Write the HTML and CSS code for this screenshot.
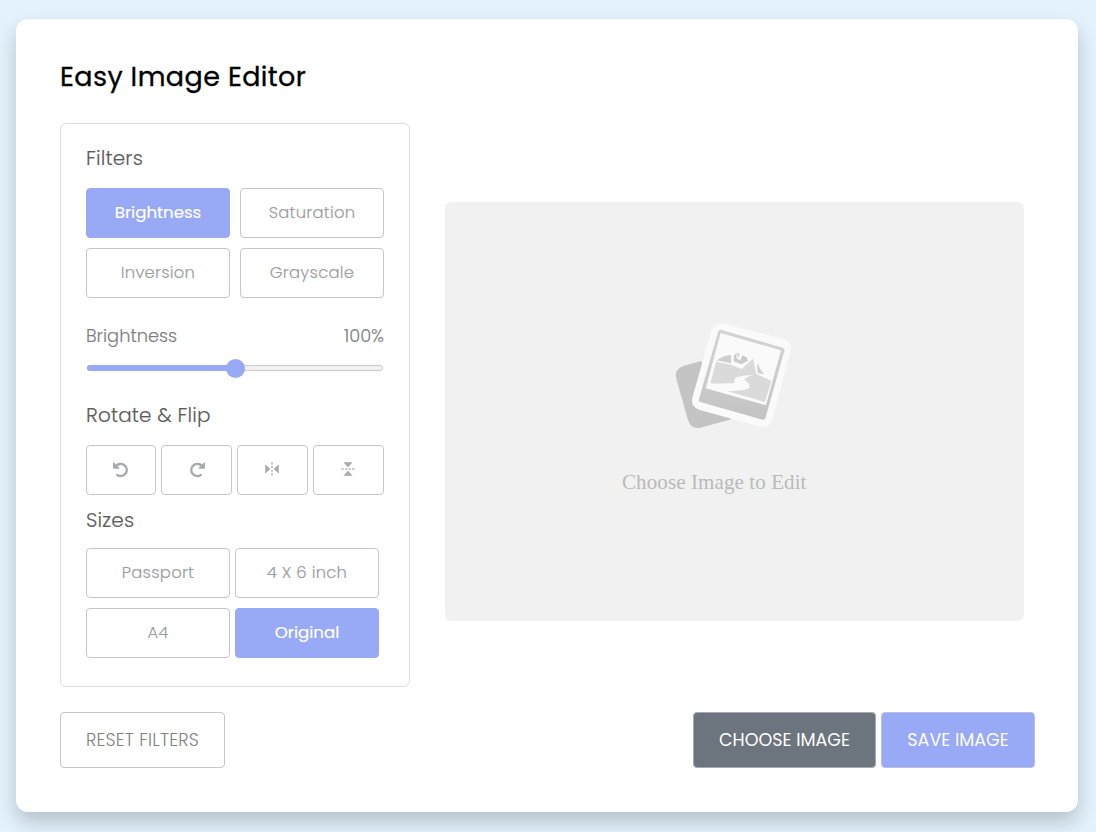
FILE: index.html
```html
<!DOCTYPE html>
<html lang="en">
<head>
<meta charset="utf-8">
<title>Easy Image Editor</title>
<link rel="stylesheet" href="styles.css">
</head>
<body>
<div class="container">
  <h1 class="heading"><span>Easy Image Editor</span></h1>
  <div class="wrapper">
    <div class="editor-panel">
      <h2 class="title title-filters">Filters</h2>
      <div class="options filters">
        <button class="option active">Brightness</button>
        <button class="option">Saturation</button>
        <button class="option">Inversion</button>
        <button class="option">Grayscale</button>
      </div>
      <div class="slider">
        <div class="slider-info"><span class="name">Brightness</span><span class="value">100%</span></div>
        <div class="track"><div class="fill"></div><div class="thumb"></div></div>
      </div>
      <h2 class="title title-rotate">Rotate &amp; Flip</h2>
      <div class="options rotate">
        <button class="option" aria-label="Rotate left"><svg width="16" height="16" viewBox="0 0 16 16"><path d="M2.6 4.6A6.1 6.1 0 1 1 4.2 13" fill="none" stroke="currentColor" stroke-width="2.3" stroke-linecap="round"/><path d="M0 .9Q0 0 .8.6L6.2 5.8Q6.8 6.8 5.7 6.8H.8Q0 6.8 0 6Z" fill="currentColor"/></svg></button>
        <button class="option" aria-label="Rotate right"><svg width="16" height="16" viewBox="0 0 16 16"><path d="M13.4 4.6A6.1 6.1 0 1 0 11.8 13" fill="none" stroke="currentColor" stroke-width="2.3" stroke-linecap="round"/><path d="M16 .9Q16 0 15.2.6L9.8 5.8Q9.2 6.8 10.3 6.8h4.9Q16 6.8 16 6Z" fill="currentColor"/></svg></button>
        <button class="option" aria-label="Flip horizontal"><svg class="flip" width="14" height="14" viewBox="0 0 14 14"><path d="M.5 3v8L5 7ZM13.500 3v8L9 7Z" fill="currentColor" stroke="currentColor" stroke-width=".6"/><path d="M7 .5v13" stroke="currentColor" stroke-width="1.400" stroke-dasharray="2 1.600"/></svg></button>
        <button class="option" aria-label="Flip vertical"><svg class="flip" width="14" height="14" viewBox="0 0 14 14"><path d="M3 .5h8L7 5ZM3 13.500h8L7 9Z" fill="currentColor" stroke="currentColor" stroke-width=".6"/><path d="M.5 7h13" stroke="currentColor" stroke-width="1.400" stroke-dasharray="2 1.600"/></svg></button>
      </div>
      <h2 class="title title-sizes">Sizes</h2>
      <div class="options sizes">
        <button class="option">Passport</button>
        <button class="option">4 X 6 inch</button>
        <button class="option">A4</button>
        <button class="option active">Original</button>
      </div>
    </div>
    <div class="preview">
      <svg class="picture" width="150" height="130" viewBox="0 0 450 390">
        <defs><linearGradient id="shade" x1="0" y1="0" x2="0" y2="1"><stop offset="0" stop-color="#d4d4d4"/><stop offset="1" stop-color="#c3c3c3"/></linearGradient></defs>
        <path d="M124 153L69 168Q42 178 49 207L84 330Q93 359 121 353L214 328Z" fill="#c4c4c4"/>
        <path d="M188 40L372 88Q398 97 392 122L335 333Q327 356 301 350L117 299Q91 289 97 263L154 62Q162 37 188 40Z" fill="#fafafa"/>
        <path d="M183 59L368 113Q375 116 373 123L316 325Q314 330 308 329L121 276Q115 274 117 268L174 65Q176 58 183 59Z" fill="url(#shade)"/>
        <path d="M182 69L363 121L318 286L137 235Z" fill="#fafafa"/>
        <path d="M169 154L213 161L244 175L281 142L290 188L334 213L315 276L203 244L151 218Z" fill="#dadada"/>
        <path d="M167 154Q191 134 216 135L215 163L187 158ZM292 158Q299 177 312 193L292 190Z" fill="#cfcfcf"/>
        <path d="M222 137L230 128L260 142L264 152L244 163L221 154Z" fill="#cacaca"/>
        <path d="M228 124L236 143L240 124L247 137L240 152L230 144Z" fill="#fafafa"/>
        <path d="M147 221L222 220Q221 204 233 200Q253 195 281 194Q249 203 254 211Q275 224 267 235Q248 243 202 244L145 230Z" fill="#fafafa"/>
        <path d="M169 153L213 162L244 174L281 141L291 190L330 208M216 134L216 162" fill="none" stroke="#fafafa" stroke-width="5"/>
      </svg>
      <span class="hint">Choose Image to Edit</span>
    </div>
  </div>
  <div class="controls">
    <button class="btn reset"><span>RESET FILTERS</span></button>
    <div class="row">
      <button class="btn choose"><span>CHOOSE IMAGE</span></button>
      <button class="btn save"><span>SAVE IMAGE</span></button>
    </div>
  </div>
</div>
</body>
</html>
```
FILE: styles.css
```css
* { box-sizing: border-box; margin: 0; padding: 0; }
body {
  background: #e3f2fd;
  padding: 19px 18px 20px 16px;
  height: 832px;
  overflow: hidden;
  font-family: Poppins, Inter, sans-serif;
}
button { font-family: inherit; background: #fff; }
svg { display: block; }
.container {
  height: 793px;
  padding: 38px 43px 44px 44px;
  background: #fff;
  border-radius: 12px;
  box-shadow: 0 10px 20px rgba(0, 0, 0, .2);
}
.heading { height: 66px; font-size: 27px; line-height: 40px; font-weight: 400; letter-spacing: .4px; color: #000; white-space: nowrap; -webkit-text-stroke: .3px #000; }
.wrapper { display: flex; height: 564px; gap: 35px; }
.editor-panel { width: 350px; flex: none; padding: 19px 25px; border: 1px solid #dedede; border-radius: 6px; }
.title { font-size: 20px; line-height: 30px; font-weight: 300; letter-spacing: .15px; color: #5c5c5c; white-space: nowrap; -webkit-text-stroke: .15px #5c5c5c; }
.title-filters { margin-bottom: 15px; }
.title-rotate { margin: 29px 0 15px; }
.title-sizes { margin: 10px 0 13px; }
.options { display: grid; }
.filters { grid-template-columns: 144px 144px; gap: 10px; }
.rotate { grid-template-columns: 70px 71px 71px 71px; column-gap: 5px; }
.sizes { grid-template-columns: 144px 144px; gap: 10px 5px; }
.option {
  display: flex; align-items: center; justify-content: center;
  height: 50px; border: 1px solid #c6c6c8; border-radius: 4px;
  font-size: 16.4px; font-weight: 300; letter-spacing: .25px; color: #9b9da1; white-space: nowrap;
  padding: 0 0 2px; -webkit-text-stroke: .15px #9b9da1;
}
.rotate .option { padding: 0 0 1px; color: #a7a9ac; }
.rotate .flip { margin: 0 1px 2px 0; }
.option.active { background: #98a9f5; border-color: #98a9f5; color: #fff; font-size: 16.6px; font-weight: 400; letter-spacing: 0; -webkit-text-stroke: .2px #fff; }
.slider { margin-top: 25px; }
.slider-info { display: flex; justify-content: space-between; font-size: 17.8px; line-height: 26px; font-weight: 300; color: #808080; -webkit-text-stroke: .15px #808080; }
.track { display: flex; align-items: center; height: 6px; margin: 16px 1px 0; border: 1px solid #ccc; border-radius: 3px; background: #f1f1f1; }
.fill { width: 148px; height: 6px; margin-left: -1px; flex: none; border-radius: 3px; background: #98a9f5; }
.thumb { width: 19px; height: 19px; flex: none; margin-left: -9px; border-radius: 50%; background: #98a9f5; }
.preview {
  width: 579px; height: 419px; margin-top: 79px; padding-top: 108px;
  background: #f1f1f1; border-radius: 6px;
}
.picture { margin-left: 215px; }
.hint { display: block; margin: 28px 0 0 177px; font: 21px/28px "Liberation Serif", serif; letter-spacing: .1px; color: #bababa; white-space: nowrap; }
.controls { display: flex; justify-content: space-between; margin-top: 25px; }
.row { display: flex; gap: 5px; }
.btn { height: 56px; border: 1px solid #c6c6c8; border-radius: 4px; font-size: 17.5px; color: #fff; white-space: nowrap; }
.reset { width: 165px; color: #808080; font-weight: 300; letter-spacing: .25px; }
.choose { width: 183px; background: #6c757d; border-color: #a5a9ad; }
.save { width: 154px; background: #98a9f5; border-color: #b9bfdf; }
```
